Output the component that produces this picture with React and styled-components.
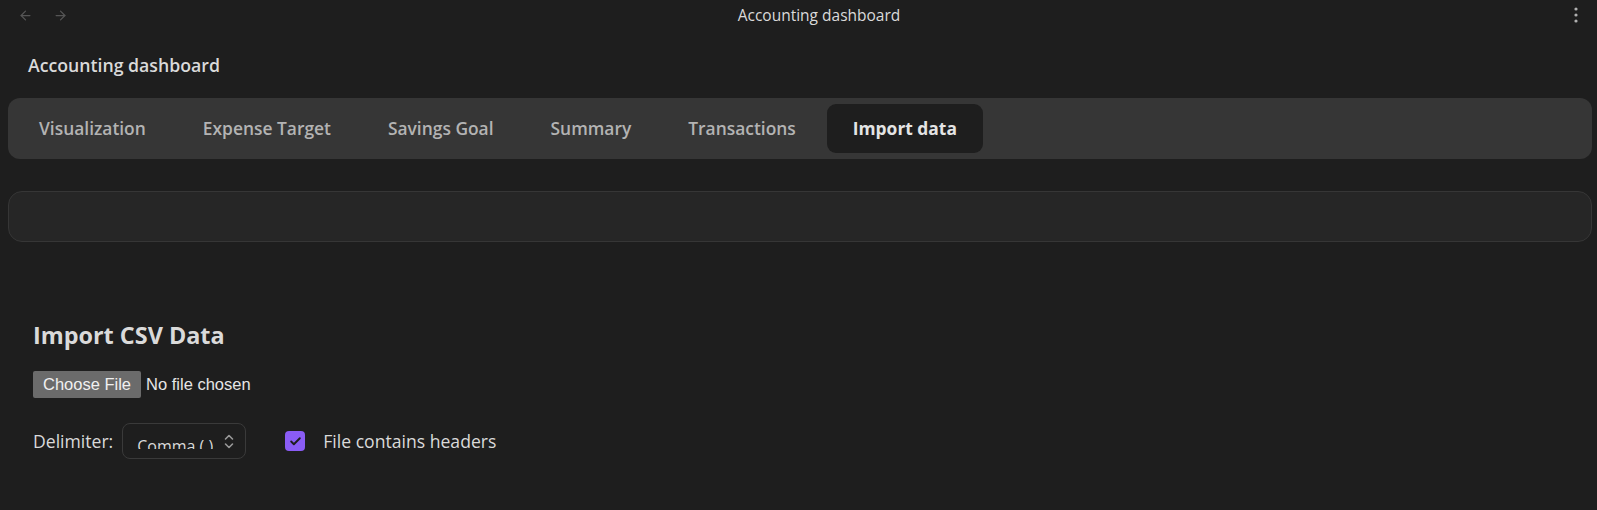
import React from "react";
import styled, { createGlobalStyle } from "styled-components";

const GlobalStyle = createGlobalStyle`
  html, body {
    margin: 0;
    background: #1e1e1e;
    color: #dadada;
    font-family: "Open Sans", "Noto Sans", sans-serif;
    color-scheme: dark;
  }
`;

const TitleBar = styled.div`
  height: 30px;
  display: grid;
  grid-template-columns: 1fr auto 1fr;
  align-items: center;
`;

const NavButtons = styled.div`
  display: flex;
  gap: 20px;
  padding-left: 18px;
  color: #555;
`;

const WindowTitle = styled.div`
  margin-left: 41px;
  font-size: 15.5px;
  color: #dadada;
`;

const MenuButton = styled.div`
  justify-self: end;
  padding-right: 19px;
  display: flex;
  color: #b0b0b0;
`;

const Content = styled.div`
  padding: 0 5px 40px 8px;
`;

const PageHeader = styled.h1`
  margin: 23px 0 0 20px;
  font-size: 17.7px;
  line-height: 24px;
  font-weight: 600;
  color: #dadada;
`;

const TabBar = styled.div`
  margin-top: 21px;
  display: flex;
  gap: 5px;
  padding: 6px 5px;
  background: #363636;
  border-radius: 12px;
`;

const Tab = styled.div`
  height: 49px;
  line-height: 49px;
  padding: 0 26px;
  border-radius: 9px;
  font-size: 17.4px;
  font-weight: ${(p) => (p.$active ? 700 : 600)};
  color: ${(p) => (p.$active ? "#e4e4e4" : "#b3b3b3")};
  background: ${(p) => (p.$active ? "#1e1e1e" : "transparent")};
`;

const EmptyPanel = styled.div`
  margin-top: 32px;
  height: 51px;
  box-sizing: border-box;
  border: 1px solid #363636;
  border-radius: 14px;
  background: #262626;
`;

const ImportSection = styled.section`
  padding-left: 25px;
  margin-top: 77px;
`;

const SectionTitle = styled.h2`
  margin: 0;
  font-size: 23.4px;
  line-height: 32px;
  font-weight: 700;
  color: #dadada;
`;

const FileInput = styled.input`
  display: block;
  margin-top: 20px;
  font-family: "Liberation Sans", Arial, sans-serif;
  font-size: 16.5px;
  color: #e6e6e6;
  &::file-selector-button {
    font-family: "Liberation Sans", Arial, sans-serif;
    font-size: 16.5px;
    height: 27px;
    padding: 0 10px;
    margin-right: 5px;
    border: none;
    border-radius: 2px;
    background: #6b6b6b;
    color: #f0f0f0;
  }
`;

const OptionsRow = styled.div`
  margin-top: 25px;
  display: flex;
  align-items: center;
  font-size: 17.6px;
  color: #dadada;
`;

const Select = styled.div`
  margin-left: 9px;
  width: 124px;
  height: 36px;
  box-sizing: border-box;
  border: 1px solid #3a3a3a;
  border-radius: 8px;
  background: #1e1e1e;
  display: flex;
  justify-content: space-between;
  padding: 0 10px 0 14px;
`;

const SelectClip = styled.span`
  margin-top: 12px;
  height: 13px;
  overflow: hidden;
  line-height: 20px;
  font-size: 16px;
  white-space: nowrap;
`;

const SelectArrows = styled.span`
  display: flex;
  align-items: center;
  color: #9a9a9a;
`;

const CheckLabel = styled.label`
  margin-left: 39px;
  display: flex;
  align-items: center;
  gap: 18px;
`;

const CheckBox = styled.span`
  width: 20px;
  height: 20px;
  border-radius: 4px;
  background: #8a5cf5;
  display: flex;
  align-items: center;
  justify-content: center;
  color: #1e1e1e;
`;

const tabs = [
  "Visualization",
  "Expense Target",
  "Savings Goal",
  "Summary",
  "Transactions",
  "Import data",
];

export default function App() {
  return (
    <>
      <GlobalStyle />
      <TitleBar>
        <NavButtons>
          <svg width="15" height="15" viewBox="0 0 24 24" fill="none" stroke="currentColor" strokeWidth="2" strokeLinecap="round" strokeLinejoin="round">
            <path d="m12 19-7-7 7-7" />
            <path d="M19 12H5" />
          </svg>
          <svg width="15" height="15" viewBox="0 0 24 24" fill="none" stroke="currentColor" strokeWidth="2" strokeLinecap="round" strokeLinejoin="round">
            <path d="M5 12h14" />
            <path d="m12 5 7 7-7 7" />
          </svg>
        </NavButtons>
        <WindowTitle>Accounting dashboard</WindowTitle>
        <MenuButton>
          <svg width="4" height="16" viewBox="0 0 4 16" fill="currentColor">
            <circle cx="2" cy="2" r="1.6" />
            <circle cx="2" cy="8" r="1.6" />
            <circle cx="2" cy="14" r="1.6" />
          </svg>
        </MenuButton>
      </TitleBar>
      <Content>
        <PageHeader>Accounting dashboard</PageHeader>
        <TabBar>
          {tabs.map((t) => (
            <Tab key={t} $active={t === "Import data"}>
              {t}
            </Tab>
          ))}
        </TabBar>
        <EmptyPanel />
        <ImportSection>
          <SectionTitle>Import CSV Data</SectionTitle>
          <FileInput type="file" accept=".csv" />
          <OptionsRow>
            <span>Delimiter:</span>
            <Select>
              <SelectClip>Comma (,)</SelectClip>
              <SelectArrows>
                <svg width="12" height="15" viewBox="0 0 12 15" fill="none" stroke="currentColor" strokeWidth="1.6" strokeLinecap="round" strokeLinejoin="round">
                  <path d="m2.5 5 3.5-3.5 3.5 3.5" />
                  <path d="m2.5 10 3.5 3.5 3.5-3.5" />
                </svg>
              </SelectArrows>
            </Select>
            <CheckLabel>
              <CheckBox>
                <svg width="13" height="13" viewBox="0 0 24 24" fill="none" stroke="currentColor" strokeWidth="3.5" strokeLinecap="round" strokeLinejoin="round">
                  <path d="M20 6 9 17l-5-5" />
                </svg>
              </CheckBox>
              File contains headers
            </CheckLabel>
          </OptionsRow>
        </ImportSection>
      </Content>
    </>
  );
}
